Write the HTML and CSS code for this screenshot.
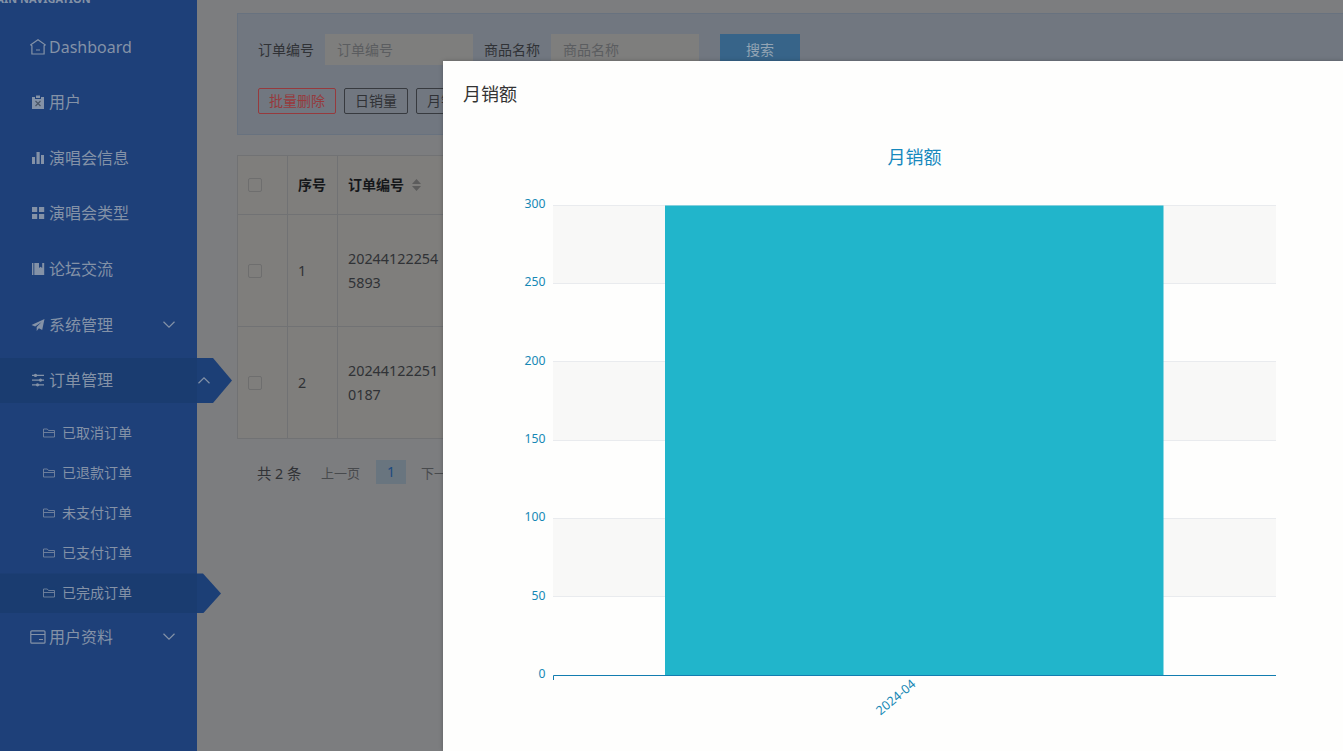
FILE: index.html
```html
<!DOCTYPE html>
<html lang="zh-CN">
<head>
<meta charset="utf-8">
<title>订单管理</title>
<link rel="stylesheet" href="styles.css">
</head>
<body>
<svg class="sprite" aria-hidden="true">
  <symbol id="folder" viewBox="0 0 12 10"><path d="M.5 9V1h3.800l1.200 1.500h6V9zM.5 4.500h11" fill="none" stroke="currentColor" stroke-width=".9"/></symbol>
  <symbol id="down" viewBox="0 0 12 7"><path d="M.5.7 6 6.100 11.500.7" fill="none" stroke="currentColor" stroke-width="1.200"/></symbol>
</svg>
<div class="app">
  <aside class="sidebar">
    <div class="nav-heading">MAIN NAVIGATION</div>
    <nav class="nav">
      <a class="nav-item"><svg class="icon" viewBox="0 0 16 16" fill="none" stroke="currentColor" stroke-width="1.200"><path d="M.8 5.800 8 .8l7.200 5-1.100 1V15H1.900V6.800zM6 11h4"/></svg><span>Dashboard</span></a>
      <a class="nav-item"><svg class="icon" viewBox="0 0 16 16"><path d="M2 3h3v2h6V3h3v12H2zM6 1.500h4V4H6z" fill="currentColor"/><path d="m5.500 7 5 5m0-5-5 5" stroke="#4a5666" stroke-width="1.200"/></svg><span>用户</span></a>
      <a class="nav-item"><svg class="icon" viewBox="0 0 16 16" fill="currentColor"><path d="M2 7h3v7H2zM6.500 2h3.200v12H6.500zM11 5h3v9h-3z"/></svg><span>演唱会信息</span></a>
      <a class="nav-item"><svg class="icon" viewBox="0 0 16 16" fill="currentColor"><path d="M2 2h5.200v5H2zM9 2h5.200v5H9zM2 9h5.200v5H2zM9 9h5.200v5H9z"/></svg><span>演唱会类型</span></a>
      <a class="nav-item"><svg class="icon" viewBox="0 0 16 16" fill="currentColor"><path d="M2 2h1.400v12H2zM4.300 2H9v5l1.600-1.300L12.200 7V2h2v12H4.300z"/></svg><span>论坛交流</span></a>
      <a class="nav-item"><svg class="icon" viewBox="0 0 16 16" fill="currentColor"><path d="M14.500 2 1.500 8l3.700 1.500L11.500 5 6.700 10v4l2.200-2.700 3.300 1.800z"/></svg><span>系统管理</span><svg class="chevron"><use href="#down"/></svg></a>
      <a class="nav-item nav-item-active"><svg class="icon" viewBox="0 0 16 16" fill="currentColor"><path d="M2 2.800h12V4H2zM2 7.500h12v1.200H2zM2 12.200h12v1.200H2z"/><circle cx="5.500" cy="3.400" r="1.600"/><circle cx="10.500" cy="8.100" r="1.600"/><circle cx="7.500" cy="12.800" r="1.600"/></svg><span>订单管理</span><svg class="chevron chevron-up"><use href="#down"/></svg></a>
    </nav>
    <div class="subnav">
      <a class="sub-item"><svg class="folder"><use href="#folder"/></svg>已取消订单</a>
      <a class="sub-item"><svg class="folder"><use href="#folder"/></svg>已退款订单</a>
      <a class="sub-item"><svg class="folder"><use href="#folder"/></svg>未支付订单</a>
      <a class="sub-item"><svg class="folder"><use href="#folder"/></svg>已支付订单</a>
      <a class="sub-item sub-item-active"><svg class="folder"><use href="#folder"/></svg>已完成订单</a>
    </div>
    <a class="nav-item"><svg class="icon" viewBox="0 0 16 16" fill="none" stroke="currentColor" stroke-width="1.200"><rect x=".8" y="1.800" width="14.200" height="12.400" rx="1"/><path d="M1 5.500h14M9 10.500h4"/></svg><span>用户资料</span><svg class="chevron"><use href="#down"/></svg></a>
  </aside>

  <main class="content">
    <section class="filters">
      <div class="fields">
        <label class="label">订单编号</label><input class="input" placeholder="订单编号">
        <label class="label">商品名称</label><input class="input" placeholder="商品名称">
        <button class="search">搜索</button>
      </div>
      <div class="actions">
        <button class="btn btn-danger">批量删除</button>
        <button class="btn">日销量</button>
        <button class="btn">月销</button>
      </div>
    </section>
    <div class="table">
      <div class="cell head"><i class="check"></i></div>
      <div class="cell head">序号</div>
      <div class="cell head">订单编号<svg class="sort" viewBox="0 0 9 12"><path d="M0 5 4.500 0 9 5zM0 7h9l-4.500 5z" fill="#5c5c5c"/></svg></div>
      <div class="cell"><i class="check"></i></div>
      <div class="cell">1</div>
      <div class="cell"><span>20244122254<br>5893</span></div>
      <div class="cell"><i class="check"></i></div>
      <div class="cell">2</div>
      <div class="cell"><span>20244122251<br>0187</span></div>
    </div>
    <div class="pager"><span class="total">共 2 条</span><span class="prev">上一页</span><span class="page">1</span><span class="next">下一页</span></div>
  </main>
</div>

<section class="modal">
  <h2 class="modal-title">月销额</h2>
  <svg class="chart" viewBox="0 0 900 624">
    <text class="chart-title" x="471.500" y="37" text-anchor="middle">月销额</text>
    <g fill="#f8f8f7"><path d="M110 78h723v78H110zM110 235h723v78H110zM110 391h723v79H110z"/></g>
    <path d="M110 78.500h723M110 156.500h723M110 234.500h723M110 313.500h723M110 391.500h723M110 469.500h723" stroke="#e9ebee"/>
    <rect x="222" y="78.500" width="498.500" height="470" fill="#21b5cb"/>
    <path d="M110.500 553v-4.500H833" fill="none" stroke="#137db0"/>
    <g class="axis" text-anchor="end">
      <text x="102.500" y="81">300</text><text x="102.500" y="159">250</text><text x="102.500" y="238">200</text><text x="102.500" y="316">150</text><text x="102.500" y="394">100</text><text x="102.500" y="473">50</text><text x="102.500" y="551">0</text>
    </g>
    <text class="axis axis-x" text-anchor="end" transform="translate(473.500 558.500) rotate(-40)">2024-04</text>
  </svg>
</section>
</body>
</html>
```
FILE: styles.css
```css
* { box-sizing: border-box; }
body {
  margin: 0;
  height: 751px;
  overflow: hidden;
  position: relative;
  background: #7c7d7f;
  color: #303236;
  font: 14px/24px "Noto Sans", "Noto Sans CJK SC", sans-serif;
}
button, input { font: inherit; }
.sprite { position: absolute; width: 0; height: 0; }
.app { display: flex; height: 751px; }

.sidebar { flex: none; width: 197px; background: #1e4079; color: #8492a7; }
.nav-heading {
  height: 24px;
  margin: -8px 0 8px -14px;
  line-height: 14px;
  font-size: 11px;
  font-weight: 700;
  white-space: nowrap;
}
.nav { display: flex; flex-direction: column; gap: 10.670px; margin-bottom: 10.500px; }
.nav-item {
  display: flex;
  align-items: center;
  height: 45px;
  padding: 0 22px 0 30px;
  font-size: 16px;
}
.icon { width: 16px; height: 16px; margin-right: 3px; flex: none; }
.chevron { width: 12px; height: 7px; margin-left: auto; }
.chevron-up { transform: rotate(180deg); }
.nav-item-active {
  width: 232px;
  background: linear-gradient(90deg, #1a3c70 197px, #1c3f76 197px);
  clip-path: polygon(0 0, 213px 0, 100% 50%, 213px 100%, 0 100%);
}
.subnav { margin-bottom: 1px; }
.sub-item { display: flex; align-items: center; height: 40px; padding-left: 43px; }
.folder { width: 12px; height: 10px; margin-right: 7px; opacity: .85; }
.sub-item-active {
  width: 221px;
  background: linear-gradient(90deg, #1a3c70 197px, #1c3f76 197px);
  clip-path: polygon(0 0, 203px 0, 100% 50%, 203px 100%, 0 100%);
}

.content { flex: 1; min-width: 0; padding: 13px 0 0 40px; }
.filters {
  height: 122px;
  padding: 20px;
  border: 1px solid #68727f;
  border-right: 0;
  background: #717780;
}
.fields { display: flex; align-items: center; height: 31px; }
.label { margin-right: 11px; }
.input {
  width: 148px;
  height: 31px;
  margin-right: 11px;
  padding: 0 12px;
  border: 0;
  background: #7e7e7d;
}
.input::placeholder { color: #5b5d60; opacity: 1; }
.search { width: 80px; height: 32px; margin-left: 10px; padding: 1px 0 0; border: 0; background: #376489; color: #93a4b4; }
.actions { display: flex; gap: 8px; margin-top: 23px; }
.btn { height: 26px; padding: 0 10px; border: 1px solid #373a3f; border-radius: 2px; background: none; line-height: 22px; color: #303236; }
.btn-danger { border-color: #963a3d; color: #963a3d; }

.table {
  display: grid;
  grid-template: 59px 112px 112px / 50px 50px 400px;
  width: 502px;
  margin-top: 20px;
  border: 1px solid #717274;
  border-width: 1px 0 0 1px;
  background: #7f7e7c;
}
.cell { display: flex; align-items: center; padding: 0 10px; border: solid #717274; border-width: 0 1px 1px 0; font-size: 14.350px; }
.head { color: #15171a; font-size: 14px; font-weight: 700; }
.check { width: 14px; height: 14px; border: 1px solid #6e6e6e; border-radius: 2px; }
.sort { width: 9px; height: 12px; margin-left: 8px; }
.pager { display: flex; align-items: center; height: 24px; margin: 21px 0 0 20px; }
.total { width: 64px; padding-top: 3px; font-size: 14.350px; }
.prev, .next { font-size: 13px; color: #484a4d; white-space: nowrap; }
.prev { width: 55px; padding-top: 2px; }
.next { padding-top: 2px; }
.page { width: 30px; margin-right: 15px; background: #69757f; color: #1c4980; text-align: center; }

.modal { position: absolute; left: 443px; top: 61px; width: 900px; height: 690px; background: #fefefd; box-shadow: 0 0 4px rgba(0, 0, 0, .25); }
.modal-title { height: 66px; margin: 0; padding: 21px 20px 0; font-size: 18px; font-weight: 400; color: #333; }
.chart { display: block; width: 900px; height: 624px; }
.chart-title { font-size: 18px; fill: #1688bd; }
.axis { font-size: 12.200px; fill: #1688b5; }
.axis-x { font-size: 12.500px; }
```
